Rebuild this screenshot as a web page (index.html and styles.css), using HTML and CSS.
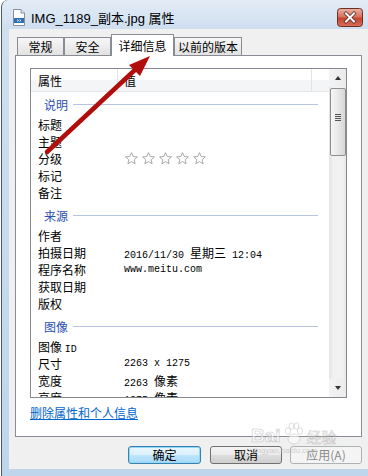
FILE: index.html
```html
<!DOCTYPE html>
<html lang="zh-CN">
<head>
    <meta charset="UTF-8">
    <meta name="viewport" content="width=device-width, initial-scale=1.0">
    <title>IMG_1189_副本.jpg 属性</title>
    <link rel="stylesheet" href="styles.css">
</head>
<body>

    <div class="window">
        <div class="titlebar">
            <svg class="app-icon" viewBox="0 0 12 17" width="12" height="17">
                <path d="M0.5 0.5 H8 L11.5 4 V16.5 H0.5 Z" fill="#fff" stroke="#8a9099"/>
                <path d="M8 0.5 V4 H11.5" fill="#e6e9ee" stroke="#8a9099"/>
                <rect x="1" y="9" width="10" height="5" fill="#2d6fb3"/>
                <path d="M4 10.5 L5.5 11.5 L4 12.5 M6.5 10.5 L8 11.5 L6.5 12.5" fill="none" stroke="#fff" stroke-width="0.8"/>
            </svg>
            <span class="title">IMG_1189_副本.jpg 属性</span>
            <svg class="close" viewBox="0 0 26 19" width="26" height="19">
                <defs>
                    <linearGradient id="closeBg" x1="0" y1="0" x2="0" y2="1">
                        <stop offset="0" stop-color="#eab3a6"/>
                        <stop offset="0.45" stop-color="#d9735e"/>
                        <stop offset="0.55" stop-color="#c7452f"/>
                        <stop offset="1" stop-color="#d8705a"/>
                    </linearGradient>
                </defs>
                <rect x="0.5" y="0.5" width="25" height="18" rx="3" fill="url(#closeBg)" stroke="#6e2f27"/>
                <path d="M9 5.5 L17 13.5 M17 5.5 L9 13.5" stroke="#5a2a24" stroke-width="3.6" stroke-linecap="square"/>
                <path d="M9 5.5 L17 13.5 M17 5.5 L9 13.5" stroke="#fff" stroke-width="2" stroke-linecap="square"/>
            </svg>
        </div>

        <div class="client">
            <div class="tabs">
                <div class="tab tab-general">常规</div>
                <div class="tab tab-security">安全</div>
                <div class="tab tab-details active">详细信息</div>
                <div class="tab tab-versions">以前的版本</div>
            </div>

            <div class="panel">
                <div class="listbox">
                    <div class="list">
                        <div class="list-head">
                            <span class="col-name">属性</span>
                            <span class="col-value">值</span>
                            <span class="col-rest"></span>
                        </div>
                        <div class="rows">
                            <div class="group"><span>说明</span></div>
                            <div class="row"><span class="name">标题</span><span class="value"></span></div>
                            <div class="row"><span class="name">主题</span><span class="value"></span></div>
                            <div class="row">
                                <span class="name">分级</span>
                                <svg class="stars" viewBox="0 0 84 13" width="84" height="13">
                                    <defs>
                                        <polygon id="star" points="6.5,0.6 8.2,4.5 12.4,4.9 9.2,7.7 10.1,11.8 6.5,9.6 2.9,11.8 3.8,7.7 0.6,4.9 4.8,4.5"/>
                                    </defs>
                                    <use href="#star" x="0"/>
                                    <use href="#star" x="17"/>
                                    <use href="#star" x="34"/>
                                    <use href="#star" x="51"/>
                                    <use href="#star" x="68"/>
                                </svg>
                            </div>
                            <div class="row"><span class="name">标记</span><span class="value"></span></div>
                            <div class="row"><span class="name">备注</span><span class="value"></span></div>

                            <div class="group"><span>来源</span></div>
                            <div class="row"><span class="name">作者</span><span class="value"></span></div>
                            <div class="row"><span class="name">拍摄日期</span><span class="value">2016/11/30 <span class="cn">星期三</span> 12:04</span></div>
                            <div class="row"><span class="name">程序名称</span><span class="value">www.meitu.com</span></div>
                            <div class="row"><span class="name">获取日期</span><span class="value"></span></div>
                            <div class="row"><span class="name">版权</span><span class="value"></span></div>

                            <div class="group"><span>图像</span></div>
                            <div class="row"><span class="name">图像 <span class="mono">ID</span></span><span class="value"></span></div>
                            <div class="row"><span class="name">尺寸</span><span class="value">2263 x 1275</span></div>
                            <div class="row"><span class="name">宽度</span><span class="value">2263 <span class="cn">像素</span></span></div>
                            <div class="row"><span class="name">高度</span><span class="value">1275 <span class="cn">像素</span></span></div>
                        </div>
                    </div>
                    <div class="scrollbar">
                        <div class="sb-btn"><span class="arrow-up"></span></div>
                        <div class="sb-thumb"><span class="grip"></span></div>
                        <div class="sb-track"></div>
                        <div class="sb-btn"><span class="arrow-down"></span></div>
                    </div>
                </div>
                <a class="remove-link" href="#">删除属性和个人信息</a>
            </div>

            <div class="buttons">
                <button class="btn default">确定</button>
                <button class="btn">取消</button>
                <button class="btn" disabled>应用(A)</button>
            </div>
        </div>
    </div>

    <!-- red annotation arrow pasted over the screenshot -->
    <svg class="annotation" viewBox="0 0 368 476" width="368" height="476">
        <line x1="47" y1="152" x2="137" y2="68" stroke="#b10d0d" stroke-width="4.5" stroke-linecap="round"/>
        <polygon points="150,56 140,76 129,65" fill="#b10d0d"/>
    </svg>

    <div class="watermark">
        <div class="wm-top">
            <span class="wm-bai">Bai</span>
            <svg class="wm-paw" viewBox="0 0 22 24" width="22" height="24">
                <ellipse cx="11" cy="17" rx="6" ry="5"/>
                <ellipse cx="5" cy="9" rx="2.6" ry="3.4"/>
                <ellipse cx="17" cy="9" rx="2.6" ry="3.4"/>
                <ellipse cx="8.5" cy="4" rx="2.4" ry="3.2"/>
                <ellipse cx="13.5" cy="4" rx="2.4" ry="3.2"/>
            </svg>
            <span class="wm-jy">经验</span>
        </div>
        <div class="wm-url">jingyan.baidu.com</div>
    </div>

</body>
</html>
```

FILE: styles.css
```css
body {
    margin: 0;
    width: 368px;
    height: 476px;
    overflow: hidden;
    position: relative;
    background: #fff;
    font-family: "Noto Sans CJK SC", "Liberation Sans", sans-serif;
    font-size: 12px;
    color: #000;
}

.window {
    margin-left: 1px;
    width: 375px;
    height: 476px;
    box-sizing: border-box;
    border-left: 1px solid #4a5868;
    border-top-left-radius: 7px;
    background: linear-gradient(#e3ecf6, #cfdff0 28px, #bfd5ec);
    padding: 0 7px 7px 7px;
    display: flex;
    flex-direction: column;
}

.titlebar {
    height: 29px;
    box-sizing: border-box;
    margin: 0 -7px;
    padding: 5px 0 0 11px;
    display: flex;
    align-items: center;
}
.app-icon { margin-right: 6px; flex: none; }
.title {
    font-family: "Liberation Sans", "Noto Sans CJK SC", sans-serif;
    font-size: 13px;
}
.close {
    margin-left: auto;
    margin-right: 13px;
    align-self: flex-start;
    margin-top: 3px;
}

.client {
    flex: 1;
    background: #f0f0f0;
    padding: 5px 7px 0 6px;
    display: flex;
    flex-direction: column;
}

/* tabs */
.tabs {
    display: flex;
    align-items: flex-end;
    height: 22px;
    padding-left: 2px;
    margin-bottom: -1px;
    position: relative;
    z-index: 1;
}
.tab {
    height: 18px;
    box-sizing: border-box;
    border: 1px solid #898c95;
    border-bottom: none;
    margin-bottom: 1px;
    background: linear-gradient(#f7f7f7, #ececec 50%, #e2e2e2);
    display: flex;
    align-items: center;
    justify-content: center;
    line-height: 1;
}
.tab-general { width: 47px; }
.tab-security { width: 47px; }
.tab-details { width: 63px; }
.tab-versions { width: 68px; }
.tab.active {
    height: 22px;
    margin-bottom: 0;
    background: #fff;
}

.panel {
    width: 347px;
    height: 382px;
    box-sizing: border-box;
    border: 1px solid #898c95;
    background: #fff;
    padding: 12px 14px 0 14px;
}

/* property list */
.listbox {
    height: 330px;
    box-sizing: border-box;
    border: 1px solid #828790;
    display: flex;
}
.list {
    flex: 1;
    overflow: hidden;
}
.list-head {
    height: 23px;
    box-sizing: border-box;
    display: flex;
    border-bottom: 1px solid #e5e6e8;
    background: linear-gradient(#fff 0%, #fff 50%, #f4f5f7 51%, #f4f5f7 100%);
}
.list-head span {
    display: flex;
    align-items: center;
    box-sizing: border-box;
}
.col-name { width: 87px; padding-left: 7px; border-right: 1px solid #e3e4e6; }
.col-value { width: 194px; padding-left: 6px; border-right: 1px solid #e3e4e6; }
.col-rest { flex: 1; }

.group {
    height: 24px;
    margin-top: 2px;
    display: flex;
    align-items: center;
    padding: 0 11px 0 13px;
    color: #2a4fb2;
}
.group:first-child { margin-top: 0; }
.group::after {
    content: "";
    flex: 1;
    height: 1px;
    margin-left: 5px;
    background: #b6c4df;
}

.row {
    height: 17px;
    display: flex;
    align-items: center;
    white-space: nowrap;
}
.name {
    width: 93px;
    padding-left: 7px;
    box-sizing: border-box;
    flex: none;
}
.value, .mono {
    font-family: "Liberation Mono", "Noto Sans CJK SC", monospace;
    font-size: 10px;
}
.value .cn {
    font-family: "Noto Sans CJK SC", sans-serif;
    font-size: 12px;
}
.stars { fill: #fff; stroke: #a9a9a9; stroke-width: 1; stroke-linejoin: round; margin-left: 1px; }

/* scrollbar */
.scrollbar {
    width: 17px;
    display: flex;
    flex-direction: column;
    background: linear-gradient(to right, #e4e4e4, #f1f1f1 25%, #f1f1f1 80%, #e7e7e7);
}
.sb-btn {
    height: 18px;
    display: flex;
    align-items: center;
    justify-content: center;
    background: linear-gradient(to right, #f3f3f3, #ebebeb);
}
.arrow-up, .arrow-down {
    width: 0;
    height: 0;
    border-left: 3.5px solid transparent;
    border-right: 3.5px solid transparent;
}
.arrow-up { border-bottom: 4px solid #333; }
.arrow-down { border-top: 4px solid #333; }
.sb-thumb {
    height: 68px;
    margin: 1px 0 0 1px;
    box-sizing: border-box;
    border: 1px solid #8f8f8f;
    border-radius: 2px;
    background: linear-gradient(to right, #f6f6f6, #e8e8e8 50%, #d6d6d6);
    display: flex;
    align-items: center;
    justify-content: center;
}
.grip {
    width: 6px;
    height: 7px;
    background: repeating-linear-gradient(#555 0 1px, transparent 1px 2px);
    margin-top: -10px;
}
.sb-track { flex: 1; }

.remove-link {
    display: inline-block;
    margin-top: 7px;
    line-height: 16px;
    color: #0066cc;
    text-decoration: underline;
}

/* dialog buttons */
.buttons {
    display: flex;
    justify-content: flex-end;
    gap: 8px;
    margin-top: 9px;
}
.btn {
    width: 72px;
    height: 18px;
    box-sizing: border-box;
    padding: 0;
    border: 1px solid #707070;
    border-radius: 3px;
    background: linear-gradient(#f3f3f3, #ebebeb 50%, #dddddd 51%, #cfcfcf);
    font-family: "Noto Sans CJK SC", sans-serif;
    font-size: 12px;
    line-height: 16px;
    color: #000;
}
.btn.default {
    width: 73px;
    margin-right: 1px;
    border-color: #3c7fb1;
    box-shadow: inset 0 0 0 1px #8fd8f8;
    background: linear-gradient(#eaf6fd, #d9f0fc 50%, #bee6fd 51%, #a7d9f5);
}
.btn:disabled {
    border-color: #adb2b5;
    background: #f4f4f4;
    color: #8a8a8a;
}

/* overlays */
.annotation {
    position: absolute;
    left: 0;
    top: 0;
    pointer-events: none;
}
.watermark {
    position: absolute;
    left: 251px;
    top: 422px;
    opacity: 0.55;
    pointer-events: none;
}
.wm-top { display: flex; align-items: flex-end; gap: 2px; }
.wm-bai {
    font-family: "Liberation Sans", sans-serif;
    font-weight: bold;
    font-size: 19px;
    line-height: 20px;
    color: #fff;
    -webkit-text-stroke: 0.6px #9a9a9a;
}
.wm-paw { fill: #fff; stroke: #9a9a9a; stroke-width: 0.6; }
.wm-jy {
    font-size: 15px;
    line-height: 18px;
    color: #fff;
    -webkit-text-stroke: 0.5px #9a9a9a;
}
.wm-url {
    font-family: "Liberation Sans", sans-serif;
    font-size: 8px;
    color: #b0b0b0;
    padding-left: 2px;
}
```
